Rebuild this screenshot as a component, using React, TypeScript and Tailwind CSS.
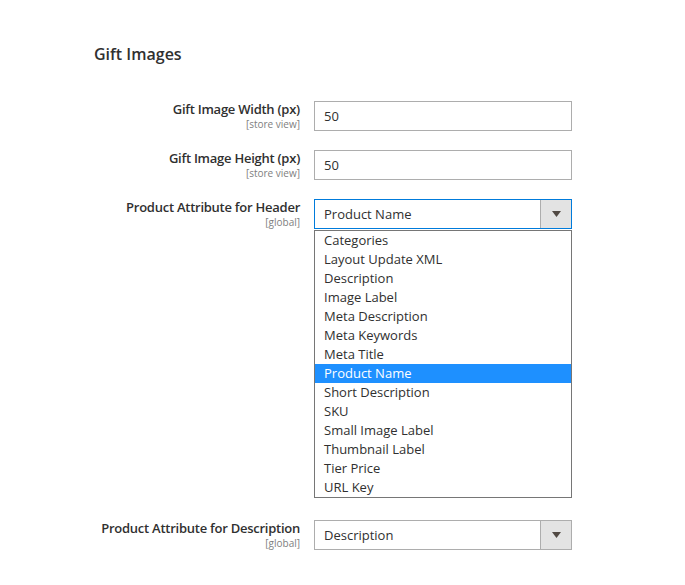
import type { ReactNode } from "react";

const options = [
  "Categories",
  "Layout Update XML",
  "Description",
  "Image Label",
  "Meta Description",
  "Meta Keywords",
  "Meta Title",
  "Product Name",
  "Short Description",
  "SKU",
  "Small Image Label",
  "Thumbnail Label",
  "Tier Price",
  "URL Key",
];

function Field({ label, scope, children }: { label: string; scope: string; children: ReactNode }) {
  return (
    <div className="flex items-start gap-[14px]">
      <div className="w-[206px] shrink-0 pt-[1px] text-right">
        <div className="whitespace-nowrap text-[13px] font-semibold leading-[15px] tracking-[-0.25px] text-[#303030]">
          {label}
        </div>
        <div className="mt-[2px] text-[10px] leading-[11px] text-[#808080]">[{scope}]</div>
      </div>
      <div className="w-[258px]">{children}</div>
    </div>
  );
}

function Arrow() {
  return (
    <svg width="9" height="6" viewBox="0 0 9 6">
      <path d="M0 0h9L4.5 6z" fill="#514943" />
    </svg>
  );
}

function SelectBox({ value, focused }: { value: string; focused?: boolean }) {
  return (
    <div
      className={
        focused
          ? "flex h-[30px] border border-[#007bdb] bg-white"
          : "flex h-[30px] border border-[#adadad] bg-white"
      }
    >
      <div className="flex flex-1 items-center pl-[9px] pt-[1px] text-[13px] text-[#303030]">{value}</div>
      <div className="flex w-[31px] items-center justify-center border-l border-[#adadad] bg-[#e3e3e3]">
        <Arrow />
      </div>
    </div>
  );
}

export default function App() {
  return (
    <div
      className="min-h-[585px] bg-white pl-[94px] pt-[44px]"
      style={{ fontFamily: '"Open Sans", "Noto Sans", sans-serif' }}
    >
      <h2 className="text-[16px] font-semibold leading-[20px] text-[#303030]">Gift Images</h2>

      <div className="mt-[37px] flex flex-col">
        <Field label="Gift Image Width (px)" scope="store view">
          <div className="flex h-[30px] items-center border border-[#adadad] pl-[9px] pt-[1px] text-[13px] text-[#303030]">
            50
          </div>
        </Field>

        <div className="mt-[19px]">
          <Field label="Gift Image Height (px)" scope="store view">
            <div className="flex h-[30px] items-center border border-[#adadad] pl-[9px] pt-[1px] text-[13px] text-[#303030]">
              50
            </div>
          </Field>
        </div>

        <div className="mt-[19px]">
          <Field label="Product Attribute for Header" scope="global">
            <SelectBox value="Product Name" focused />
            <ul className="mt-[1px] border border-[#767676] bg-white">
              {options.map((o) => (
                <li
                  key={o}
                  className={
                    o === "Product Name"
                      ? "flex h-[19px] items-center bg-[#1e90ff] pl-[9px] text-[13px] text-white"
                      : "flex h-[19px] items-center pl-[9px] text-[13px] text-[#303030]"
                  }
                >
                  {o}
                </li>
              ))}
            </ul>
          </Field>
        </div>

        <div className="mt-[22px]">
          <Field label="Product Attribute for Description" scope="global">
            <SelectBox value="Description" />
          </Field>
        </div>
      </div>
    </div>
  );
}
